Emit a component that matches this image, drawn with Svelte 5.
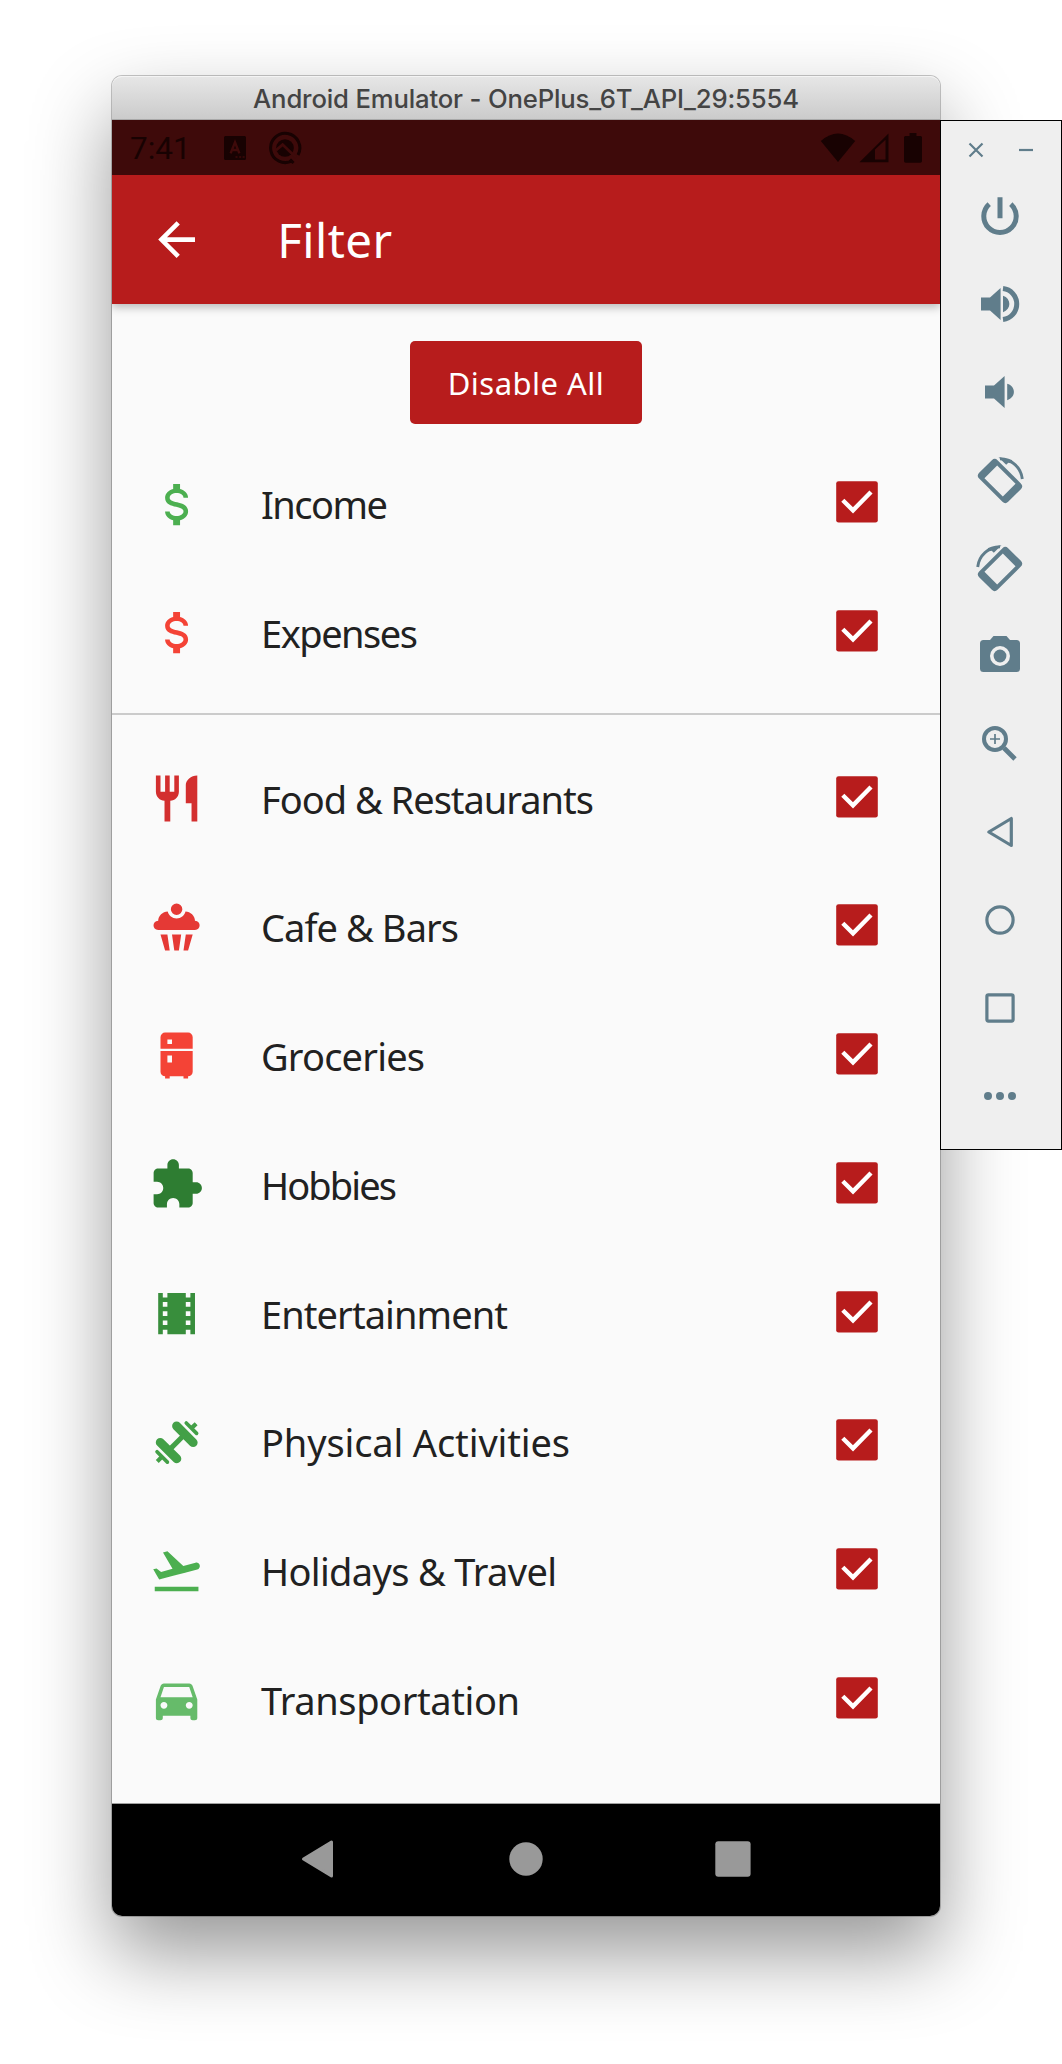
<script>
  const icons = {
    usd: 'M7 15H9C9 16.08 10.37 17 12 17C13.63 17 15 16.08 15 15C15 13.9 13.96 13.5 11.76 12.97C9.64 12.44 7 11.78 7 9C7 7.21 8.47 5.69 10.5 5.18V3H13.5V5.18C15.53 5.69 17 7.21 17 9H15C15 7.92 13.63 7 12 7C10.37 7 9 7.92 9 9C9 10.1 10.04 10.5 12.24 11.03C14.36 11.56 17 12.22 17 15C17 16.79 15.53 18.31 13.5 18.82V21H10.5V18.82C8.47 18.31 7 16.79 7 15Z',
    food: 'M11 9H9V2H7v7H5V2H3v7c0 2.12 1.66 3.84 3.75 3.97V22h2.5v-9.03C11.34 12.84 13 11.12 13 9V2h-2v7zm5-3v8h2.5v8H21V2c-2.76 0-5 2.24-5 4z',
    cupcake: 'M12 1.5A2.5 2.5 0 0 1 14.5 4A2.5 2.5 0 0 1 12 6.5A2.5 2.5 0 0 1 9.5 4A2.5 2.5 0 0 1 12 1.5M15.87 5C18 5 20 7 20 9C22.7 9 22.7 13 20 13H4C1.3 13 1.3 9 4 9C4 7 6 5 8.13 5C8.57 6.73 10.14 8 12 8C13.86 8 15.43 6.73 15.87 5M5 15H8L9 22H7L5 15M10 15H14L13 22H11L10 15M16 15H19L17 22H15L16 15Z',
    fridge: 'M7 2H17A2 2 0 0 1 19 4V9H5V4A2 2 0 0 1 7 2M19 19A2 2 0 0 1 17 21V22H15V21H9V22H7V21A2 2 0 0 1 5 19V10H19V19M8 5V7H10V5H8M8 12V15H10V12H8Z',
    puzzle: 'M20.5 11H19V7c0-1.1-.9-2-2-2h-4V3.5C13 2.12 11.88 1 10.5 1S8 2.12 8 3.5V5H4c-1.1 0-1.99.9-1.99 2v3.8H3.5c1.49 0 2.7 1.21 2.7 2.7s-1.21 2.7-2.7 2.7H2V20c0 1.1.9 2 2 2h3.8v-1.5c0-1.49 1.21-2.7 2.7-2.7 1.49 0 2.7 1.21 2.7 2.7V22H17c1.1 0 2-.9 2-2v-4h1.5c1.38 0 2.5-1.12 2.5-2.5S21.88 11 20.5 11z',
    film: 'M18 3v2h-2V3H8v2H6V3H4v18h2v-2h2v2h8v-2h2v2h2V3h-2zM8 17H6v-2h2v2zm0-4H6v-2h2v2zm0-4H6V7h2v2zm10 8h-2v-2h2v2zm0-4h-2v-2h2v2zm0-4h-2V7h2v2z',
    flight: 'M2.5 19h19v2h-19v-2zm19.57-9.36c-.21-.8-1.04-1.28-1.84-1.06L14.92 10l-6.9-6.43-1.93.51 4.14 7.17-4.97 1.33-1.97-1.54-1.45.39 1.82 3.16.77 1.33 1.6-.43 5.31-1.42 4.35-1.16L21 11.49c.81-.23 1.28-1.05 1.07-1.85z',
    car: 'M18.92 6.01C18.72 5.42 18.16 5 17.5 5h-11c-.66 0-1.21.42-1.42 1.01L3 12v8c0 .55.45 1 1 1h1c.55 0 1-.45 1-1v-1h12v1c0 .55.45 1 1 1h1c.55 0 1-.45 1-1v-8l-2.08-5.99zM6.5 16c-.83 0-1.5-.67-1.5-1.5S5.67 13 6.5 13s1.5.67 1.5 1.5S7.33 16 6.5 16zm11 0c-.83 0-1.5-.67-1.5-1.5s.67-1.5 1.5-1.5 1.5.67 1.5 1.5-.67 1.5-1.5 1.5zM5 11l1.5-4.5h11L19 11H5z'
  };

  let types = $state([
    { name: 'Income', icon: 'usd', color: '#4caf50', width: 125, on: true },
    { name: 'Expenses', icon: 'usd', color: '#f44336', width: 155, on: true }
  ]);
  let categories = $state([
    { name: 'Food & Restaurants', icon: 'food', color: '#d32f2f', width: 331, on: true },
    { name: 'Cafe & Bars', icon: 'cupcake', color: '#e53935', width: 196, on: true },
    { name: 'Groceries', icon: 'fridge', color: '#f44336', width: 162, on: true },
    { name: 'Hobbies', icon: 'puzzle', color: '#2e7d32', width: 134, on: true },
    { name: 'Entertainment', icon: 'film', color: '#388e3c', width: 245, on: true },
    { name: 'Physical Activities', icon: 'dumbbell', color: '#43a047', width: 307, on: true },
    { name: 'Holidays & Travel', icon: 'flight', color: '#4caf50', width: 294, on: true },
    { name: 'Transportation', icon: 'car', color: '#66bb6a', width: 257, on: true }
  ]);

  const tools = ['power', 'volume-up', 'volume-down', 'rotate-left', 'rotate-right', 'camera', 'zoom', 'back', 'home', 'overview', 'more'];

  // Spaces the letters so that a label takes up the given width.
  function fit(node, width) {
    node.style.letterSpacing = '0px';
    const natural = node.getBoundingClientRect().width;
    const gaps = node.textContent.length - 1;
    node.style.letterSpacing = `${((width + 2 - natural) / gaps).toFixed(3)}px`;
  }

  function disableAll() {
    for (const item of [...types, ...categories]) item.on = false;
  }
</script>

{#snippet row(item)}
  <div class="row">
    <svg class="icon" viewBox="0 0 24 24" fill={item.color} stroke={item.color}>
      {#if item.icon === 'dumbbell'}
        <g fill="none" stroke-linecap="round">
          <path d="M12 4.8L19.2 12M4.9 11.9L12.1 19" stroke-width="3.9" />
          <path d="M8.5 15.5L15.6 8.4" stroke-width="2.2" stroke-linecap="butt" />
          <path d="M16.2 3.5L20.7 8M3.5 16L8 20.5" stroke-width="1.6" />
          <path d="M18.6 5.6L20.5 3.8M5.4 18.4L3.6 20.2" stroke-width="1.8" stroke-linecap="butt" />
        </g>
      {:else}
        <path d={icons[item.icon]} stroke="none" />
      {/if}
    </svg>
    <div class="label"><span use:fit={item.width}>{item.name}</span></div>
    <button class="check" aria-label={item.name} onclick={() => (item.on = !item.on)}>
      <svg viewBox="0 0 42 42">
        {#if item.on}
          <rect x="0.2" y="0.2" width="41.6" height="41.4" rx="2.4" fill="#b71c1c" />
          <path d="M6.8 19.3L17 29.3L35 11" fill="none" stroke="#fff" stroke-width="4.4" />
        {:else}
          <rect x="2.3" y="2.3" width="37.4" height="37.4" rx="2.4" fill="none" stroke="#757575" stroke-width="4.6" />
        {/if}
      </svg>
    </button>
  </div>
{/snippet}

<div class="desktop">
  <section class="window">
    <header class="titlebar"><span use:fit={544}>Android Emulator - OnePlus_6T_API_29:5554</span></header>

    <div class="status">
      <span class="clock">7:41</span>
      <svg class="st-a" width="22" height="24" viewBox="0 0 22 24">
        <rect width="22" height="24" rx="1.5" fill="#180202" />
        <path d="M6.6 17.4L11 6.2L15.4 17.4M8 14H14" fill="none" stroke="#3e0a0a" stroke-width="2.4" />
        <path d="M11.5 21h2M15.2 21h2M18.6 21h2" stroke="#3e0a0a" stroke-width="1.6" />
      </svg>
      <svg class="st-q" width="34" height="34" viewBox="-17 -17 34 34" fill="none" stroke="#180202">
        <path d="M7.3 12.7A14.6 14.6 0 1 1 13 7" stroke-width="3" />
        <circle r="8.8" fill="#180202" stroke="none" />
        <path d="M-9 2.2L-2.4 -3.4L11 9.6" stroke="#3e0a0a" stroke-width="2.8" />
        <path d="M5 11.5L8.5 15" stroke-width="3" />
      </svg>
      <svg class="st-wifi" width="36" height="30" viewBox="0 0 36 30"><path d="M.8 8Q18 -7 35.2 8L18 29Z" fill="#180202" /></svg>
      <svg class="st-signal" width="30" height="30" viewBox="0 0 30 30">
        <path fill-rule="evenodd" d="M.5 29.2L29.5 .6V29.2ZM16 16.5V26.5H26.5V6.8Z" fill="#180202" />
      </svg>
      <svg class="st-battery" width="18" height="30" viewBox="0 0 18 30"><path d="M5.5 0h7v3H16.5a1.5 1.5 0 0 1 1.5 1.5V28a1.7 1.7 0 0 1-1.7 1.7H1.7A1.7 1.7 0 0 1 0 28V4.5A1.5 1.5 0 0 1 1.5 3H5.5Z" fill="#180202" /></svg>
    </div>

    <div class="appbar">
      <svg class="icon" viewBox="0 0 24 24" fill="#fff"><path d="M20 11H7.83l5.59-5.59L12 4l-8 8 8 8 1.41-1.41L7.83 13H20v-2z" /></svg>
      <h1><span use:fit={113}>Filter</span></h1>
    </div>

    <main>
      <button class="disable" onclick={disableAll}><span use:fit={154}>Disable All</span></button>
      {#each types as item (item.name)}{@render row(item)}{/each}
      <div class="divider"></div>
      {#each categories as item (item.name)}{@render row(item)}{/each}
    </main>

    <nav>
      <svg width="36" height="40" viewBox="0 0 36 40"><path d="M30.5 3V37L2.5 20Z" fill="#999" stroke="#999" stroke-width="3" stroke-linejoin="round" /></svg>
      <svg width="36" height="40" viewBox="0 0 36 40"><circle cx="18" cy="20" r="16.7" fill="#999" /></svg>
      <svg width="36" height="40" viewBox="0 0 36 40"><rect x=".3" y="2.3" width="35.3" height="35.4" rx="3" fill="#999" /></svg>
    </nav>
  </section>

  <aside>
    <div class="controls">
      <svg width="16" height="16" viewBox="-8 -8 16 16"><path d="M-6.5 -6.5L6.5 6.5M6.5 -6.5L-6.5 6.5" stroke-width="2.2" /></svg>
      <svg width="16" height="16" viewBox="-8 -8 16 16"><path d="M-7 0H7" stroke-width="2.2" /></svg>
    </div>
    {#each tools as tool}
      <div class="tool">
        <svg width="52" height="52" viewBox="-26 -26 52 52">
          {#if tool === 'power'}
            <path d="M-10.8 -11.8A16.2 16.2 0 1 0 10.8 -11.8M0 -18.7V2.3" stroke-width="5" />
          {:else if tool === 'volume-up'}
            <path class="solid" d="M-19 -6.5H-10L.6 -16V16L-10 6.5H-19ZM3 -8.2C11.5 -5.5 11.5 5.5 3 8.2Z" />
            <path d="M3 -15.4A15.5 15.5 0 0 1 3 15.4" stroke-width="5" />
          {:else if tool === 'volume-down'}
            <path class="solid" d="M-15 -6.5H-6L4.6 -16V16L-6 6.5H-15ZM7.2 -8.2C16.2 -5.5 16.2 5.5 7.2 8.2Z" />
          {:else if tool === 'rotate-left' || tool === 'rotate-right'}
            <g transform={tool === 'rotate-right' ? 'scale(-1 1)' : undefined}>
              <path class="solid" transform="translate(0 1) rotate(45)" d="M-16.5 -13H16.5a4 4 0 0 1 4 4V9a4 4 0 0 1-4 4H-16.5a4 4 0 0 1-4-4V-9a4 4 0 0 1 4-4ZM-13 -9V9H13V-9Z" />
              <path d="M0 -21.2A22.5 22.5 0 0 1 22.3 -1" stroke-width="2.9" />
              <path class="solid" d="M-1.5 -22.7L6.2 -15.2L8.3 -17.3L12 -16.5V-20Z" />
            </g>
          {:else if tool === 'camera'}
            <path class="solid" d="M-6.5 -20H6.5L10 -16H16.5A3.5 3.5 0 0 1 20 -12.5V12.5A3.5 3.5 0 0 1 16.5 16H-16.5A3.5 3.5 0 0 1 -20 12.5V-12.5A3.5 3.5 0 0 1 -16.5 -16H-10ZM0 -10A10 10 0 0 0 0 10A10 10 0 0 0 0 -10Z" />
            <circle class="solid" r="6.4" />
          {:else if tool === 'zoom'}
            <circle cx="-5" cy="-5" r="11" stroke-width="4" />
            <path d="M-10 -5H0M-5 -10V0" stroke-width="1.7" />
            <path d="M4 4L15 15" stroke-width="4.8" />
          {:else if tool === 'back'}
            <path d="M-11.2 0L11.3 -13.5V13.5Z" stroke-width="3.2" stroke-linejoin="round" />
          {:else if tool === 'home'}
            <circle r="13.1" stroke-width="3.2" />
          {:else if tool === 'overview'}
            <rect x="-13.1" y="-13.1" width="26.2" height="26.2" rx="1.5" stroke-width="3.2" />
          {:else}
            <path class="solid" d="M-16 0a4 4 0 1 1 8 0a4 4 0 1 1-8 0ZM-4 0a4 4 0 1 1 8 0a4 4 0 1 1-8 0ZM8 0a4 4 0 1 1 8 0a4 4 0 1 1-8 0Z" />
          {/if}
        </svg>
      </div>
    {/each}
  </aside>
</div>

<style>
  :global(body) {
    margin: 0;
    background: #fff;
  }
  .desktop {
    box-sizing: border-box;
    width: 1062px;
    height: 2064px;
    padding: 76px 0 0 112px;
    display: flex;
    align-items: flex-start;
    overflow: hidden;
    font-family: 'Noto Sans', sans-serif;
  }
  svg {
    display: block;
    flex: none;
  }
  span {
    white-space: nowrap;
  }
  button {
    border: 0;
    padding: 0;
    font: inherit;
  }
  .window {
    width: 828px;
    height: 1840px;
    flex: none;
    display: flex;
    flex-direction: column;
    border-radius: 10px;
    background: #fafafa;
    box-shadow:
      0 0 0 1px rgba(0, 0, 0, 0.22),
      0 37px 80px rgba(0, 0, 0, 0.41);
  }
  .titlebar {
    box-sizing: border-box;
    height: 44px;
    display: flex;
    justify-content: center;
    border-top: 1px solid #f4f4f4;
    border-bottom: 1px solid #a8a8a8;
    border-radius: 10px 10px 0 0;
    background: linear-gradient(#e6e6e6, #cbcbcb);
    color: #444;
    font: 500 25.7px/44px Inter, sans-serif;
  }
  .status {
    height: 55px;
    display: flex;
    align-items: center;
    background: #3e0a0a;
  }
  .clock {
    width: 93px;
    padding: 3px 0 0 18px;
    margin-right: 1px;
    color: #180202;
    font: 31.5px/50px Roboto, sans-serif;
  }
  .st-q {
    margin-left: 22px;
  }
  .st-wifi {
    margin-left: auto;
  }
  .st-signal {
    margin: 0 15px 0 3px;
  }
  .st-battery {
    margin-right: 18px;
  }
  .appbar {
    box-sizing: border-box;
    height: 129px;
    display: flex;
    align-items: center;
    padding-left: 37px;
    background: #b71c1c;
    color: #fff;
    box-shadow: 0 3px 9px rgba(0, 0, 0, 0.28);
    clip-path: inset(0 0 -16px 0);
  }
  .icon {
    width: 55.2px;
    height: 55.2px;
  }
  h1 {
    margin: 1px 0 0 73px;
    font-size: 47.5px;
    line-height: 60px;
    font-weight: 400;
  }
  main {
    height: 1500px;
    display: flex;
    flex-direction: column;
    box-sizing: border-box;
    padding-top: 37px;
    border-bottom: 1px solid #a0a0a0;
  }
  .disable {
    flex: none;
    align-self: center;
    width: 232px;
    height: 82.5px;
    margin-bottom: 16.4px;
    border-radius: 5px;
    background: #b71c1c;
    color: #fff;
    font-size: 31px;
    line-height: 84px;
    font-weight: 400;
  }
  .row {
    flex: none;
    height: 128.75px;
    display: flex;
    align-items: center;
    padding: 0 62px 0 36.8px;
  }
  .label {
    flex: 1;
    padding-left: 57px;
    color: #212121;
    font-size: 38px;
    line-height: 54px;
  }
  .check {
    width: 42px;
    height: 42px;
    margin-bottom: 4px;
    background: none;
    cursor: pointer;
  }
  .divider {
    flex: none;
    box-sizing: border-box;
    height: 36.8px;
    padding-bottom: 4px;
    display: flex;
    align-items: center;
  }
  .divider::after {
    content: '';
    flex: 1;
    height: 1.5px;
    background: #cbcbcb;
  }
  nav {
    box-sizing: border-box;
    height: 112px;
    padding-bottom: 2px;
    display: flex;
    align-items: center;
    justify-content: center;
    gap: 171px;
    border-radius: 0 0 10px 10px;
    background: #000;
  }
  aside {
    box-sizing: border-box;
    width: 122px;
    height: 1030px;
    margin-top: 44px;
    position: relative;
    border: 1px solid #000;
    background: #efefef;
  }
  aside svg {
    fill: none;
    stroke: #607d8b;
  }
  .solid {
    fill: #607d8b;
    fill-rule: evenodd;
    stroke: none;
  }
  .controls {
    box-sizing: border-box;
    height: 51px;
    display: flex;
    gap: 34px;
    padding: 21px 0 0 27px;
  }
  .tool {
    height: 88px;
    display: flex;
    align-items: center;
    justify-content: center;
    padding-right: 2px;
  }
</style>
